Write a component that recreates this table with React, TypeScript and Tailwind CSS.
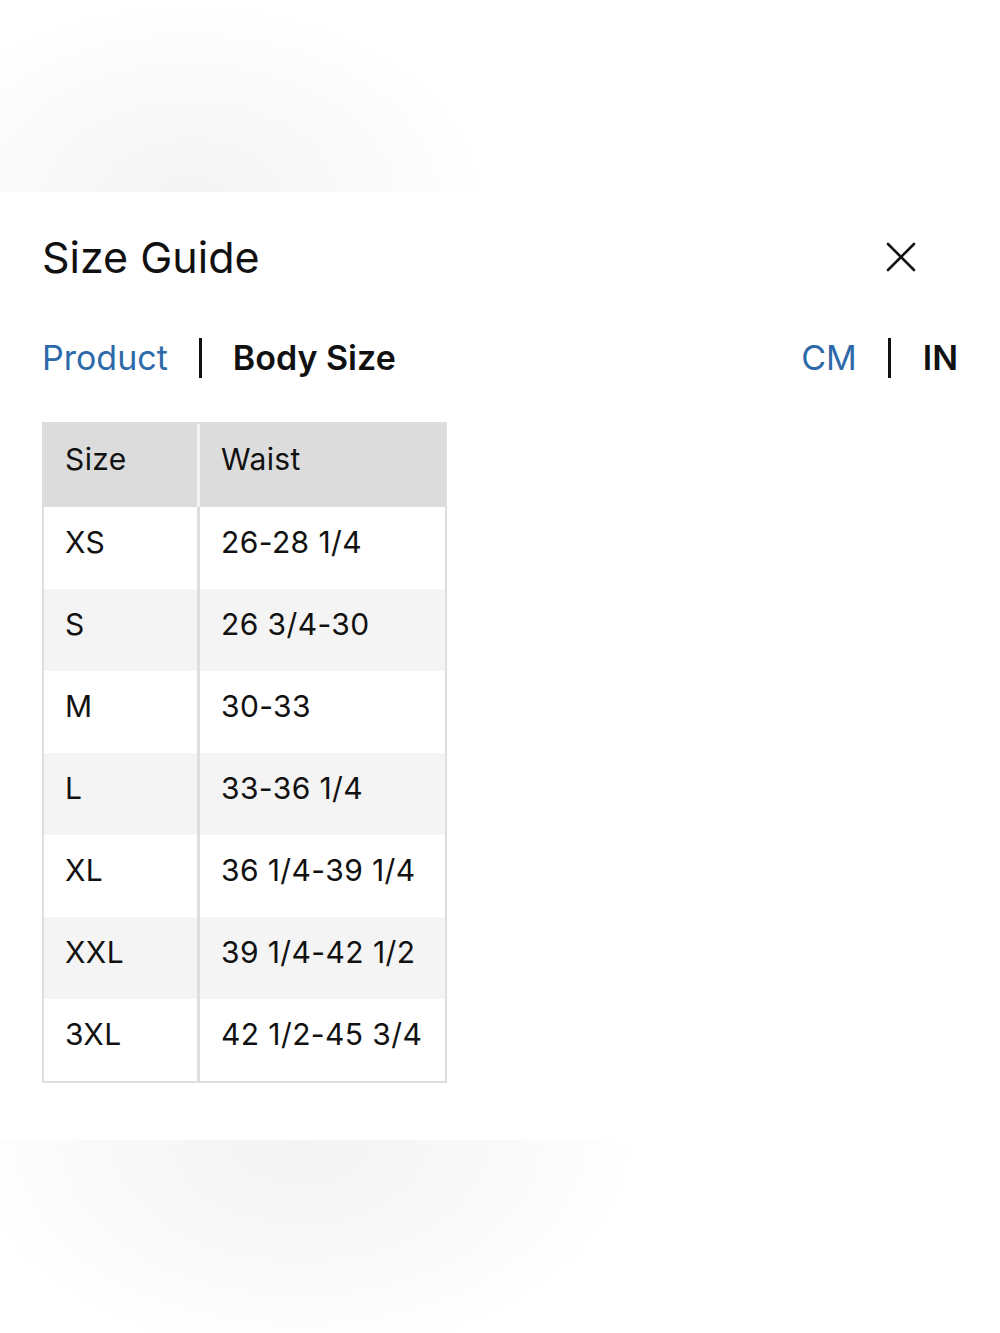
import React from "react";

const rows: [string, string][] = [
  ["XS", "26-28 1/4"],
  ["S", "26 3/4-30"],
  ["M", "30-33"],
  ["L", "33-36 1/4"],
  ["XL", "36 1/4-39 1/4"],
  ["XXL", "39 1/4-42 1/2"],
  ["3XL", "42 1/2-45 3/4"],
];

export default function App() {
  return (
    <div
      className="w-[1000px] h-[1333px] bg-white flex flex-col text-[#111]"
      style={{ fontFamily: "Inter, 'Liberation Sans', sans-serif" }}
    >
      <div className="h-[192px] shrink-0 bg-[radial-gradient(ellipse_300px_200px_at_190px_200px,#f4f4f6,#fbfbfc_70%,#ffffff_100%),radial-gradient(ellipse_180px_180px_at_900px_200px,#fbfbfd,#ffffff)] bg-white" />
      <div className="flex-1 bg-white px-[42px] pt-[36px]">
        <div className="flex items-center justify-between h-[58px]">
          <h1 className="text-[43px] font-normal leading-none">Size Guide</h1>
          <svg width="30" height="30" viewBox="0 0 30 30" className="mr-[42px]">
            <path d="M2 2 L28 28 M28 2 L2 28" stroke="#111" strokeWidth="2.6" strokeLinecap="round" />
          </svg>
        </div>
        <div className="flex items-center justify-between mt-[52px] h-[40px]">
          <div className="flex items-center">
            <span className="text-[34px] text-[#2e6aaa] leading-none">Product</span>
            <span className="w-[3px] h-[40px] bg-[#111] ml-[31px] mr-[31px]" />
            <span className="text-[34px] font-semibold leading-none">Body Size</span>
          </div>
          <div className="flex items-center">
            <span className="text-[34px] text-[#2e6aaa] leading-none">CM</span>
            <span className="w-[3px] h-[40px] bg-[#111] ml-[31px] mr-[32px]" />
            <span className="text-[34px] font-semibold leading-none">IN</span>
          </div>
        </div>
        <div className="mt-[44px] w-[405px] border-[2px] border-[#dedede] text-[30px] tracking-[0.4px]">
          <div className="flex h-[83px] bg-[#dcdcdc]">
            <div className="w-[156px] border-r-[3px] border-[#f4f4f4] pl-[21px] pb-[12px] flex items-center">Size</div>
            <div className="flex-1 pl-[21px] pb-[12px] flex items-center">Waist</div>
          </div>
          {rows.map(([s, w], i) => (
            <div key={s} className={`flex h-[82px] ${i % 2 === 1 ? "bg-[#f4f4f4]" : "bg-white"}`}>
              <div className="w-[156px] border-r-[3px] border-[#dedede] pl-[21px] pb-[12px] flex items-center">{s}</div>
              <div className="flex-1 pl-[21px] pb-[12px] flex items-center">{w}</div>
            </div>
          ))}
        </div>
      </div>
      <div className="h-[193px] shrink-0 bg-[radial-gradient(ellipse_340px_220px_at_300px_0px,#f3f3f4,#fafafa_65%,#ffffff_100%)]" />
    </div>
  );
}
